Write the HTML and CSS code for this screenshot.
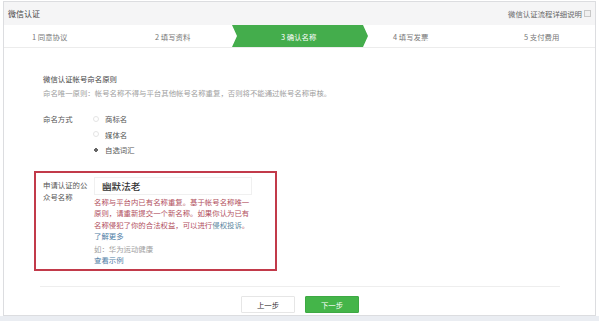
FILE: index.html
```html
<!DOCTYPE html>
<html lang="zh">
<head>
<meta charset="utf-8">
<title>微信认证</title>
<link rel="stylesheet" href="styles.css">
</head>
<body>
<div class="frame">
  <div class="titlebar">
    <span class="title">微信认证</span>
    <span class="help">微信认证流程详细说明<span class="help-icon"></span></span>
  </div>
  <div class="steps">
    <div class="step s1">1 同意协议</div>
    <div class="step s2">2 填写资料</div>
    <div class="step s3 active">3 确认名称</div>
    <div class="step s4">4 填写发票</div>
    <div class="step s5">5 支付费用</div>
  </div>
  <div class="content">
    <div class="rule">
      <div class="rule-title">微信认证帐号命名原则</div>
      <div class="rule-desc">命名唯一原则：帐号名称不得与平台其他帐号名称重复，否则将不能通过帐号名称审核。</div>
    </div>
    <div class="form-row naming">
      <div class="label">命名方式</div>
      <div class="options">
        <div class="option"><span class="radio"></span>商标名</div>
        <div class="option"><span class="radio"></span>媒体名</div>
        <div class="option"><span class="radio checked"></span>自选词汇</div>
      </div>
    </div>
    <div class="highlight">
      <div class="label name-label">申请认证的公众号名称</div>
      <div class="field">
        <div class="input">幽默法老</div>
        <div class="error">名称与平台内已有名称重复。基于帐号名称唯一原则，请重新提交一个新名称。如果你认为已有名称侵犯了你的合法权益，可以进行<span class="link">侵权投诉</span>。</div>
        <div class="link">了解更多</div>
        <div class="hint">如：华为运动健康</div>
        <div class="link">查看示例</div>
      </div>
    </div>
  </div>
  <div class="actions">
    <button class="btn prev">上一步</button>
    <button class="btn next">下一步</button>
  </div>
</div>
<div class="footer-strip"></div>
</body>
</html>
```

FILE: styles.css
```css
* { box-sizing: border-box; }
html, body { margin: 0; padding: 0; }
body {
  background: #ffffff;
  font-family: "Noto Sans CJK SC", "Noto Sans", sans-serif;
  color: #555;
  width: 599px;
  height: 321px;
  overflow: hidden;
}
.frame {
  margin: 1px 3px 0 3px;
  width: 593px;
  height: 315px;
  border: 1px solid #dcdde0;
  display: flex;
  flex-direction: column;
}
.titlebar {
  height: 23px;
  background: #f5f5f6;
  display: flex;
  align-items: center;
  justify-content: space-between;
  padding: 0 4px 0 4px;
}
.title { font-size: 8px; color: #444; }
.help { font-size: 7.4px; color: #666; display: flex; align-items: center; }
.help-icon {
  display: inline-block;
  width: 7px;
  height: 7px;
  border: 1px solid #c8c8c8;
  background: #f0f0f0;
  margin-left: 2px;
}
.steps {
  height: 23px;
  display: grid;
  grid-template-columns: 112px 116px 136px 116px 1fr;
  border-bottom: 1px solid #ececec;
  font-size: 7.4px;
  color: #777;
}
.step {
  display: flex;
  align-items: center;
  white-space: nowrap;
}
.s1 { padding-left: 28px; }
.s2 { padding-left: 39px; }
.s3 { padding-left: 49px; }
.s4 { padding-left: 25px; }
.s5 { padding-left: 40px; }
.step.active {
  background: #44ad4c;
  color: #fff;
  clip-path: polygon(0 0, calc(100% - 5px) 0, 100% 50%, calc(100% - 5px) 100%, 0 100%, 5px 50%);
}
.content {
  padding: 24px 0 0 39px;
  font-size: 7.4px;
}
.rule-title { line-height: 14px; color: #444; }
.rule-desc { line-height: 14px; color: #a0a0a0; }
.form-row { display: flex; }
.naming { margin-top: 11px; }
.label { width: 49px; color: #555; line-height: 15px; }
.options { display: flex; flex-direction: column; }
.option { line-height: 15.5px; display: flex; align-items: center; color: #555; }
.radio {
  width: 6px;
  height: 6px;
  border-radius: 50%;
  border: 1px solid #e4e4e4;
  margin-right: 6px;
  margin-left: 1px;
}
.radio.checked {
  border: none;
  background: radial-gradient(circle, #666 0 1.6px, transparent 2px);
}
.highlight {
  margin: 13px 0 0 -9px;
  width: 243px;
  height: 100px;
  border: 2px solid #c23a4a;
  display: flex;
  padding: 4px 0 0 7px;
}
.name-label {
  width: 51px;
  line-height: 12px;
  padding-top: 2px;
  padding-right: 6px;
}
.field { width: 158px; }
.input {
  height: 18px;
  border: 1px solid #f0f0f0;
  font-size: 9.6px;
  color: #333;
  font-weight: 500;
  padding-left: 7px;
  line-height: 16px;
}
.error {
  color: #b24f5e;
  line-height: 11.6px;
  margin-top: 1px;
}
.error .link { color: #5a86a0; }
.link { color: #4f7ea6; line-height: 11.6px; }
.hint { color: #a0a0a0; line-height: 11.6px; margin-top: 1px; }
.actions {
  margin: 15px 35px 0 36px;
  border-top: 1px solid #eeeeee;
  padding-top: 9px;
  display: flex;
  justify-content: center;
  gap: 10px;
}
.btn {
  width: 54px;
  height: 17px;
  font-family: "Noto Sans CJK SC", sans-serif;
  font-size: 7.4px;
  padding: 0;
  border-radius: 1px;
}
.prev { background: #fff; border: 1px solid #e6e6e6; color: #333; }
.next { background: #44b549; border: 1px solid #3ea944; color: #fff; }
.footer-strip {
  height: 6px;
  background: #eaedf2;
}
```
